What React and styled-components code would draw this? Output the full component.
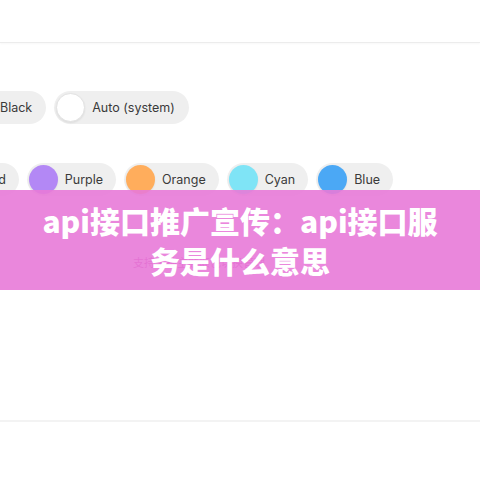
import React from "react";
import styled, { createGlobalStyle } from "styled-components";

const Global = createGlobalStyle`
  html, body { margin: 0; padding: 0; background: #fff; }
  body { font-family: "Inter", "Noto Sans", "Noto Sans CJK SC", sans-serif; }
`;

const Page = styled.div`
  position: relative;
  width: 480px;
  height: 480px;
  overflow: hidden;
  background: #fff;
`;

const TopBar = styled.div`
  height: 42px;
  border-bottom: 1px solid #ececec;
  box-shadow: 0 1px 2px rgba(0, 0, 0, 0.03);
`;

const Options = styled.div`
  display: flex;
  flex-direction: column;
  gap: 39px;
  padding-top: 48px;
`;

const Row = styled.div`
  display: flex;
  gap: 8px;
  margin-left: ${(p) => p.$shift}px;
`;

const Pill = styled.div`
  flex: none;
  display: flex;
  align-items: center;
  gap: 7px;
  height: 33px;
  padding: 0 ${(p) => p.$padEnd}px 0 2px;
  border-radius: 17px;
  background: #efefef;
  box-sizing: border-box;
  font-size: 12.5px;
  color: #3a3a3a;
`;

const Dot = styled.span`
  width: 29px;
  height: 29px;
  border-radius: 50%;
  background: ${(p) => p.$color};
  box-shadow: 0 1px 2px rgba(0, 0, 0, 0.08);
  border: ${(p) => (p.$outline ? "1px solid #e2e2e2" : "none")};
  box-sizing: border-box;
`;

const Hint = styled.div`
  margin: 58px 0 0 133px;
  font-size: 11px;
  color: #c0309f;
`;

const Footer = styled.div`
  position: absolute;
  left: 0;
  right: 0;
  top: 420px;
  height: 2px;
  background: #f3f3f3;
`;

const Banner = styled.div`
  position: absolute;
  left: 0;
  right: 0;
  top: 190px;
  height: 100px;
  background: rgba(232, 122, 216, 0.9);
  display: flex;
  align-items: center;
  justify-content: center;
`;

const Title = styled.h1`
  margin: 0;
  width: 410px;
  text-align: center;
  color: #fff;
  font-family: "Noto Sans CJK SC", "Noto Sans", sans-serif;
  font-weight: 900;
  font-size: 30px;
  line-height: 40px;
`;

const themes = [
  { name: "Black", color: "#111" },
  { name: "Auto (system)", color: "#fff", outline: true },
];

const accents = [
  { name: "Red", color: "#f56a6a" },
  { name: "Purple", color: "#b388f5" },
  { name: "Orange", color: "#ffad5c" },
  { name: "Cyan", color: "#7fe4f6" },
  { name: "Blue", color: "#4ba8f5" },
];

function Option({ name, color, outline, padEnd = 13 }) {
  return (
    <Pill $padEnd={padEnd}>
      <Dot $color={color} $outline={outline} />
      {name}
    </Pill>
  );
}

export default function App() {
  return (
    <>
      <Global />
      <Page>
        <TopBar />
        <Options>
          <Row $shift={-38}>
            {themes.map((t) => (
              <Option key={t.name} {...t} padEnd={14} />
            ))}
          </Row>
          <Row $shift={-55}>
            {accents.map((t) => (
              <Option key={t.name} {...t} />
            ))}
          </Row>
        </Options>
        <Hint>支持多种主题颜色切换管理</Hint>
        <Footer />
        <Banner>
          <Title>api接口推广宣传：api接口服务是什么意思</Title>
        </Banner>
      </Page>
    </>
  );
}
